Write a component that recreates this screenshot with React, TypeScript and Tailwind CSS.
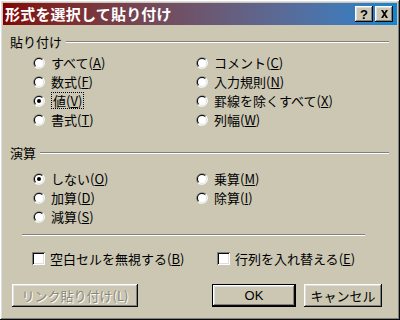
import React from 'react'

const raised =
  'shadow-[inset_-1px_-1px_#0a0a0a,inset_1px_1px_#ffffff,inset_-2px_-2px_#808080,inset_2px_2px_#dfdfdf]'
const sunken =
  'shadow-[inset_1px_1px_#808080,inset_-1px_-1px_#ffffff,inset_2px_2px_#0a0a0a,inset_-2px_-2px_#dfdfdf]'

function Radio({ checked }: { checked?: boolean }) {
  return (
    <svg width="12" height="12" viewBox="0 0 12 12" className="shrink-0">
      <path d="M1.76 10.24A6 6 0 0 1 10.24 1.76Z" fill="#808080" />
      <path d="M1.76 10.24A6 6 0 0 0 10.24 1.76Z" fill="#ffffff" />
      <path d="M2.46 9.54A5 5 0 0 1 9.54 2.46Z" fill="#0a0a0a" />
      <path d="M2.46 9.54A5 5 0 0 0 9.54 2.46Z" fill="#dfdfdf" />
      <circle cx="6" cy="6" r="4" fill="#ffffff" />
      {checked && <circle cx="6" cy="6" r="2" fill="#000000" />}
    </svg>
  )
}

function Label({ text, k, focus }: { text: string; k: string; focus?: boolean }) {
  return (
    <span className={focus ? 'border border-dotted border-black px-[1px] leading-[15px]' : 'leading-[15px]'}>
      {text}(<span className="underline underline-offset-[1px]">{k}</span>)
    </span>
  )
}

function RadioItem({ text, k, checked, focus }: { text: string; k: string; checked?: boolean; focus?: boolean }) {
  return (
    <div className="h-[19px] flex items-center gap-[6px]">
      <Radio checked={checked} />
      <Label text={text} k={k} focus={focus} />
    </div>
  )
}

function GroupHeader({ label, className }: { label: string; className?: string }) {
  return (
    <div className={'h-[16px] flex items-center gap-[4px] ' + (className || '')}>
      <span className="leading-[16px]">{label}</span>
      <div className="flex-1 h-0 border-t border-[#808080] border-b border-b-white" />
    </div>
  )
}

function Check({ text, k }: { text: string; k: string }) {
  return (
    <div className="h-[19px] flex items-center gap-[5px]">
      <div className={'w-[13px] h-[13px] bg-white shrink-0 ' + sunken} />
      <Label text={text} k={k} />
    </div>
  )
}

export default function App() {
  return (
    <div
      className={
        'w-[400px] h-[320px] bg-[#cbc7b3] p-[3px] flex flex-col text-[13px] text-black font-["Noto_Sans_CJK_JP",sans-serif] ' +
        raised
      }
    >
      {/* Title bar */}
      <div className="h-[22px] flex items-center pl-[2px] pr-[4px] bg-gradient-to-r from-[#800000] to-[#1084d0]">
        <span className="flex-1 text-white font-bold text-[15px] tracking-[0.2px] leading-[22px]">
          形式を選択して貼り付け
        </span>
        <div className="flex gap-[2px]">
          <div className={'w-[18px] h-[16px] bg-[#cbc7b3] flex items-center justify-center font-bold text-[13px] leading-none font-["Liberation_Sans",sans-serif] ' + raised}>
            ?
          </div>
          <div className={'w-[18px] h-[16px] bg-[#cbc7b3] flex items-center justify-center ' + raised}>
            <svg width="9" height="8" viewBox="0 0 9 8">
              <path d="M1 0h2l1.5 2.5L6 0h2L5.5 4L8 8H6L4.5 5.5L3 8H1l2.5-4Z" fill="#000" />
            </svg>
          </div>
        </div>
      </div>

      <div className="flex-1 flex flex-col pl-[7px] pr-[8px]">
        <GroupHeader label="貼り付け" className="mt-[9px]" />
        <div className="mt-[3px] pl-[23px] grid grid-cols-[163px_1fr]">
          <div className="flex flex-col">
            <RadioItem text="すべて" k="A" />
            <RadioItem text="数式" k="F" />
            <RadioItem text="値" k="V" checked focus />
            <RadioItem text="書式" k="T" />
          </div>
          <div className="flex flex-col">
            <RadioItem text="コメント" k="C" />
            <RadioItem text="入力規則" k="N" />
            <RadioItem text="罫線を除くすべて" k="X" />
            <RadioItem text="列幅" k="W" />
          </div>
        </div>

        <GroupHeader label="演算" className="mt-[16px]" />
        <div className="mt-[8px] pl-[23px] grid grid-cols-[163px_1fr]">
          <div className="flex flex-col">
            <RadioItem text="しない" k="O" checked />
            <RadioItem text="加算" k="D" />
            <RadioItem text="減算" k="S" />
          </div>
          <div className="flex flex-col">
            <RadioItem text="乗算" k="M" />
            <RadioItem text="除算" k="I" />
          </div>
        </div>

        <div className="mt-[8px] ml-[12px] w-[343px] h-0 border-t border-[#808080] border-b border-b-white" />

        <div className="mt-[13px] pl-[22px] grid grid-cols-[185px_1fr]">
          <Check text="空白セルを無視する" k="B" />
          <Check text="行列を入れ替える" k="E" />
        </div>

        <div className="mt-[16px] flex items-center">
          <div className={'ml-[2px] w-[126px] h-[23px] flex items-center justify-center text-[#8a8778] [text-shadow:1px_1px_#ffffff] ' + raised}>
            リンク貼り付け(L)
          </div>
          <div className="ml-[74px] w-[84px] h-[23px] border border-black">
            <div className={'w-full h-full flex items-center justify-center font-["Liberation_Sans",sans-serif] ' + raised}>
              OK
            </div>
          </div>
          <div className={'ml-[8px] w-[78px] h-[23px] flex items-center justify-center ' + raised}>
            キャンセル
          </div>
        </div>
      </div>
    </div>
  )
}
